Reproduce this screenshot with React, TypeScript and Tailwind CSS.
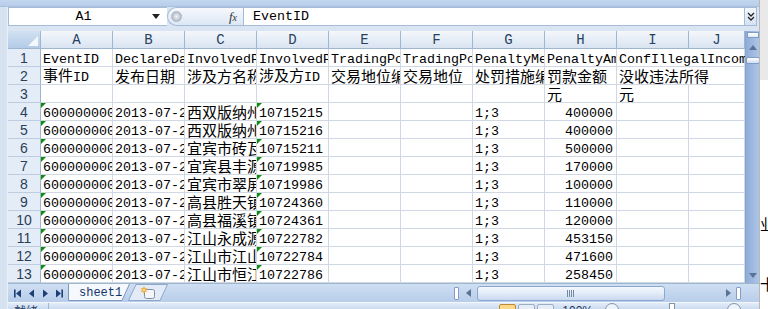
import React from 'react';

type Cell = { v?: string; right?: boolean; tri?: boolean; spill?: boolean };

const COLS = ['A', 'B', 'C', 'D', 'E', 'F', 'G', 'H', 'I', 'J'];

const names = ['西双版纳州景', '西双版纳州勐', '宜宾市砖瓦厂', '宜宾县丰源', '宜宾市翠屏区', '高县胜天镇', '高县福溪镇', '江山永成源', '江山市江山', '江山市恒江'];
const ids = ['10715215', '10715216', '10715211', '10719985', '10719986', '10724360', '10724361', '10722782', '10722784', '10722786'];
const amounts = ['400000', '400000', '500000', '170000', '100000', '110000', '120000', '453150', '471600', '258450'];

const ROWS: Cell[][] = [
  [
    { v: 'EventID' }, { v: 'DeclareDate' }, { v: 'InvolvedParty' }, { v: 'InvolvedPartyID' },
    { v: 'TradingPosition' }, { v: 'TradingPosition' }, { v: 'PenaltyMeasure' }, { v: 'PenaltyAmount' },
    { v: 'ConfIllegalIncome', spill: true }, {},
  ],
  [
    { v: '事件ID' }, { v: '发布日期' }, { v: '涉及方名称' }, { v: '涉及方ID' },
    { v: '交易地位编码' }, { v: '交易地位' }, { v: '处罚措施编码' }, { v: '罚款金额' },
    { v: '没收违法所得', spill: true }, {},
  ],
  [{}, {}, {}, {}, {}, {}, {}, { v: '元' }, { v: '元' }, {}],
  ...names.map((n, i) => [
    { v: '6000000000' + (12 + i), tri: true },
    { v: '2013-07-26' },
    { v: n },
    { v: ids[i], tri: true },
    {},
    {},
    { v: '1;3' },
    { v: amounts[i], right: true },
    {},
    {},
  ]),
];

// SimSun-ish: half-width latin, full-width hanzi
function Text({ s }: { s: string }) {
  const runs: { cjk: boolean; t: string }[] = [];
  for (const ch of s) {
    const cjk = /[\u3000-\u9fff\uff00-\uffef]/.test(ch);
    const last = runs[runs.length - 1];
    if (last && last.cjk === cjk) last.t += ch;
    else runs.push({ cjk, t: ch });
  }
  return (
    <span className="leading-none">
      {runs.map((r, i) =>
        r.cjk ? (
          <span key={i} className="font-['Noto_Sans_CJK_SC',sans-serif] text-[15px]">{r.t}</span>
        ) : (
          <span key={i} className="font-['Liberation_Mono',monospace] text-[13.33px]">{r.t}</span>
        ),
      )}
    </span>
  );
}

function FormulaBar() {
  return (
    <div className="flex h-[19px] shrink-0 items-stretch">
      {/* name box */}
      <div className="w-[159px] shrink-0 flex items-center bg-white border border-[#a5bbd6] border-r-0">
        <div className="flex-1 text-center pl-[6px] font-['Liberation_Mono',monospace] text-[13.33px] leading-none text-black">A1</div>
        <svg width="8" height="5" viewBox="0 0 8 5" className="mr-[7px]">
          <path d="M0 0 L8 0 L4 5 Z" fill="#222" />
        </svg>
      </div>
      {/* fx pill */}
      <div className="w-[76px] shrink-0 flex items-center rounded-l-full border border-r-0 border-[#a5bbd6] bg-linear-to-b from-[#f6f9fd] to-[#dce7f5]">
        <div className="ml-[3px] w-[11px] h-[11px] rounded-full bg-radial from-[#f4f4f4] to-[#9da8b6] border border-[#aab5c3]" />
        <div className="flex-1" />
        <span className="mr-[6px] font-['Liberation_Serif',serif] italic text-[13px] leading-none text-[#333]">
          f<span className="text-[10px]">x</span>
        </span>
      </div>
      {/* formula input */}
      <div className="w-[502px] shrink-0 flex items-center bg-white border border-[#a5bbd6] pl-[9px]">
        <span className="font-['Liberation_Mono',monospace] text-[13.33px] leading-none text-black">EventID</span>
      </div>
      {/* expand */}
      <div className="w-[12px] shrink-0 flex items-center justify-center border border-l-0 border-[#a5bbd6] bg-linear-to-b from-[#f4f8fd] to-[#d4e1f2]">
        <svg width="8" height="9" viewBox="0 0 8 9">
          <path d="M1 1 L4 4 L7 1 M1 5 L4 8 L7 5" stroke="#222" strokeWidth="1.3" fill="none" />
        </svg>
      </div>
    </div>
  );
}

function Grid() {
  return (
    <div className="w-[737px] shrink-0 flex flex-col overflow-hidden bg-white">
      <div className="flex h-[18px] shrink-0">
        <div className="w-[33px] shrink-0 flex items-end justify-end pr-[2px] pb-[2px] border-r border-b border-[#9eb6ce] bg-linear-to-b from-[#d3e1f2] to-[#b4cbe8]">
          <svg width="10" height="10" viewBox="0 0 10 10">
            <path d="M10 0 L10 10 L0 10 Z" fill="#f4f8fc" />
          </svg>
        </div>
        {COLS.map((c, i) => (
          <div
            key={c}
            className={`${i === 9 ? 'w-[56px]' : 'w-[72px]'} shrink-0 flex items-center justify-center border-r border-b border-[#9eb6ce] bg-linear-to-b from-[#f4f7fb] to-[#d9e4f2] font-['Liberation_Mono',monospace] text-[14px] leading-none text-[#27415f]`}
          >
            {c}
          </div>
        ))}
      </div>
      {ROWS.map((row, r) => (
        <div key={r} className="flex h-[18px] shrink-0">
          <div className="w-[33px] shrink-0 flex items-center justify-center bg-[#e4ecf7] border-r border-[#9eb6ce] border-b border-b-[#bccde2] font-['Liberation_Sans',sans-serif] text-[14px] leading-none text-[#2b3f57]">
            {r + 1}
          </div>
          {row.map((c, i) => (
            <div
              key={i}
              className={`${i === 9 ? 'w-[56px]' : 'w-[72px]'} relative shrink-0 flex items-center whitespace-nowrap leading-none text-black border-b border-r border-[#d0d7e5] ${
                c.spill ? 'overflow-visible z-10 border-r-transparent' : 'overflow-hidden'
              } ${c.right ? 'justify-end pr-[3px]' : 'pl-[2px]'}`}
            >
              {c.tri && (
                <span className="absolute left-0 top-0 w-0 h-0 border-t-[5px] border-r-[5px] border-t-[#108c10] border-r-transparent" />
              )}
              {c.v && <Text s={c.v} />}
            </div>
          ))}
        </div>
      ))}
    </div>
  );
}

function VScroll() {
  return (
    <div className="w-[14px] shrink-0 flex flex-col items-center bg-linear-to-r from-[#8facd8] to-[#adc6e8] border-l border-[#86a7d4]">
      <div className="mt-[1px] w-[12px] h-[6px] bg-linear-to-b from-white to-[#dfe8f5] border border-[#7f9dc6]" />
      <div className="h-[19px] flex items-center justify-center">
        <svg width="8" height="5" viewBox="0 0 8 5">
          <path d="M0 5 L4 0 L8 5 Z" fill="#5a7294" />
        </svg>
      </div>
      <div className="w-[14px] h-[7px] rounded-[2px] bg-linear-to-b from-white to-[#d2e0f2] border border-[#7f9dc6]" />
      <div className="flex-1" />
      <div className="h-[16px] flex items-center justify-center">
        <svg width="8" height="5" viewBox="0 0 8 5">
          <path d="M0 0 L8 0 L4 5 Z" fill="#5a7294" />
        </svg>
      </div>
    </div>
  );
}

function NavIcon({ kind }: { kind: 'first' | 'prev' | 'next' | 'last' }) {
  return (
    <svg width="9" height="9" viewBox="0 0 9 9">
      {kind === 'first' && <path d="M1 0.5 H2.6 V8.5 H1 Z M8 0.5 V8.5 L3 4.5 Z" fill="#1d3f78" />}
      {kind === 'prev' && <path d="M7 0.5 V8.5 L2 4.5 Z" fill="#1d3f78" />}
      {kind === 'next' && <path d="M2 0.5 V8.5 L7 4.5 Z" fill="#1d3f78" />}
      {kind === 'last' && <path d="M1 0.5 V8.5 L6 4.5 Z M6.4 0.5 H8 V8.5 H6.4 Z" fill="#1d3f78" />}
    </svg>
  );
}

function TabBar() {
  return (
    <div className="flex h-[19px] shrink-0 items-stretch bg-linear-to-b from-[#cfdff3] to-[#b8cdea] border-t border-[#9eb6ce]">
      <div className="w-[60px] shrink-0 flex items-center justify-around pl-[2px] pr-[2px]">
        <NavIcon kind="first" />
        <NavIcon kind="prev" />
        <NavIcon kind="next" />
        <NavIcon kind="last" />
      </div>
      {/* active sheet tab */}
      <div className="relative w-[62px] shrink-0 flex items-center pl-[11px]">
        <svg className="absolute inset-0" width="62" height="17" viewBox="0 0 62 17">
          <path d="M0.5 0 V16.5 H54 L61.5 0" fill="#f5f8fc" stroke="#7d98c0" />
        </svg>
        <span className="relative font-['Liberation_Mono',monospace] text-[12px] leading-none text-[#15366b]">sheet1</span>
      </div>
      {/* new sheet tab */}
      <div className="relative w-[40px] shrink-0 -ml-[2px] flex items-center pl-[12px]">
        <svg className="absolute inset-0" width="40" height="17" viewBox="0 0 40 17">
          <path d="M0.5 16.5 L8 0.5 H39.5 L32 16.5 Z" fill="#e2ebf7" stroke="#8ea7cb" />
        </svg>
        <svg className="relative" width="16" height="14" viewBox="0 0 16 14">
          <rect x="4.5" y="3.5" width="10" height="9" rx="2" fill="#f4f6f9" stroke="#7f8fa3" />
          <path d="M4 0 L5 2.5 L7.5 2 L5.8 4 L7.5 6 L5 5.5 L4 8 L3 5.5 L0.5 6 L2.2 4 L0.5 2 L3 2.5 Z" fill="#f0a22e" />
          <circle cx="4" cy="4" r="1.3" fill="#fde07a" />
        </svg>
      </div>
      <div className="flex-1" />
      {/* horizontal scrollbar */}
      <div className="w-[292px] shrink-0 flex items-center">
        <div className="w-[5px] h-[13px] rounded-[1px] bg-white border border-[#7f9dc6] ml-[1px]" />
        <div className="w-[18px] flex items-center justify-center">
          <svg width="5" height="8" viewBox="0 0 5 8">
            <path d="M5 0 V8 L0 4 Z" fill="#5a7294" />
          </svg>
        </div>
        <div className="w-[188px] h-[15px] flex items-center justify-center rounded-[3px] border border-[#8aa8d2] bg-linear-to-b from-[#f4f8fd] via-[#e2ebf7] to-[#c9d9ef]">
          <svg width="8" height="7" viewBox="0 0 8 7">
            <path d="M0.5 0 V7 M2.5 0 V7 M4.5 0 V7 M6.5 0 V7" stroke="#7389a8" strokeWidth="1" />
          </svg>
        </div>
        <div className="flex-1" />
        <div className="w-[16px] flex items-center justify-center">
          <svg width="5" height="8" viewBox="0 0 5 8">
            <path d="M0 0 V8 L5 4 Z" fill="#5a7294" />
          </svg>
        </div>
        <div className="w-[5px] h-[13px] rounded-[1px] bg-white border border-[#7f9dc6] mr-[4px]" />
      </div>
      <div className="w-[14px] shrink-0" />
    </div>
  );
}

function StatusBar() {
  return (
    <div className="h-[7px] shrink-0 overflow-hidden bg-linear-to-b from-[#e3ecf8] to-[#cbdbf0] border-t border-[#f3f7fc]">
      <div className="h-[22px] flex items-start">
        <div className="w-[40px] pl-[6px] pt-[2px] font-['Noto_Sans_CJK_SC',sans-serif] text-[12px] leading-none text-[#1e395b]">就绪</div>
        <div className="w-px h-[18px] bg-[#9eb6ce]" />
        <div className="flex-1" />
        <div className="flex gap-[2px] pt-[1px]">
          <div className="w-[17px] h-[15px] rounded-[2px] border border-[#c28a30] bg-[#fbd98a]" />
          <div className="w-[17px] h-[15px] rounded-[2px] border border-[#9aaec8] bg-[#e6edf6]" />
          <div className="w-[17px] h-[15px] rounded-[2px] border border-[#9aaec8] bg-[#e6edf6]" />
        </div>
        <div className="ml-[8px] pt-[2px] font-['Liberation_Sans',sans-serif] text-[12px] leading-none text-[#1e395b]">100%</div>
        <div className="ml-[12px] w-[14px] h-[14px] rounded-full border border-[#7f93ad] bg-[#eef3f9]" />
        <div className="ml-[50px] w-[6px] h-[9px] border border-[#7f93ad] bg-white" />
        <div className="ml-[52px] w-[14px] h-[14px] rounded-full border border-[#7f93ad] bg-[#eef3f9]" />
        <div className="w-[18px]" />
      </div>
    </div>
  );
}

export default function App() {
  return (
    <div className="w-[768px] h-[309px] flex overflow-hidden bg-white">
      <div className="w-[759px] shrink-0 flex flex-col bg-[#d5e1f0]">
        <div className="h-[7px] shrink-0 bg-linear-to-b from-[#c2d6ef] to-[#b7cde9] border-b border-[#a9c0de]" />
        <div className="flex flex-1">
          <div className="w-[8px] shrink-0 bg-[#d7e2f0] border-r border-[#e9eff7]" />
          <div className="w-[751px] shrink-0 flex flex-col bg-[#dae5f3]">
            <FormulaBar />
            <div className="h-[5px] shrink-0" />
            <div className="flex h-[252px] shrink-0">
              <Grid />
              <VScroll />
            </div>
            <TabBar />
            <StatusBar />
          </div>
        </div>
      </div>
      <div className="w-[9px] shrink-0 flex flex-col overflow-hidden border-l border-[#b8b8b8]">
        <div className="h-[80px] bg-[#e9e9e9]" />
        <div className="h-[136px]" />
        <div className="font-['Noto_Sans_CJK_SC',sans-serif] text-[15px] leading-none text-black whitespace-nowrap">业务</div>
        <div className="h-[45px]" />
        <div className="font-['Noto_Sans_CJK_SC',sans-serif] text-[15px] leading-none text-black whitespace-nowrap">十</div>
      </div>
    </div>
  );
}
